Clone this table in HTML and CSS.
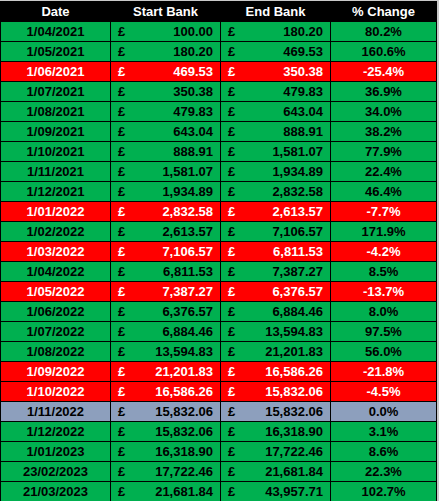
FILE: index.html
```html
<!DOCTYPE html>
<html lang="en">
<head>
    <meta charset="UTF-8">
    <title>Bank Growth</title>
    <link rel="stylesheet" href="styles.css">
</head>
<body>
    <table class="bank-table">
        <colgroup>
            <col class="col-date">
            <col class="col-money">
            <col class="col-money">
            <col class="col-change">
        </colgroup>
        <thead>
            <tr>
                <th>Date</th>
                <th>Start Bank</th>
                <th>End Bank</th>
                <th>% Change</th>
            </tr>
        </thead>
        <tbody id="rows"></tbody>
    </table>

    <script>
        const data = [
            ['1/04/2021', '100.00', '180.20', '80.2%', 'up'],
            ['1/05/2021', '180.20', '469.53', '160.6%', 'up'],
            ['1/06/2021', '469.53', '350.38', '-25.4%', 'down'],
            ['1/07/2021', '350.38', '479.83', '36.9%', 'up'],
            ['1/08/2021', '479.83', '643.04', '34.0%', 'up'],
            ['1/09/2021', '643.04', '888.91', '38.2%', 'up'],
            ['1/10/2021', '888.91', '1,581.07', '77.9%', 'up'],
            ['1/11/2021', '1,581.07', '1,934.89', '22.4%', 'up'],
            ['1/12/2021', '1,934.89', '2,832.58', '46.4%', 'up'],
            ['1/01/2022', '2,832.58', '2,613.57', '-7.7%', 'down'],
            ['1/02/2022', '2,613.57', '7,106.57', '171.9%', 'up'],
            ['1/03/2022', '7,106.57', '6,811.53', '-4.2%', 'down'],
            ['1/04/2022', '6,811.53', '7,387.27', '8.5%', 'up'],
            ['1/05/2022', '7,387.27', '6,376.57', '-13.7%', 'down'],
            ['1/06/2022', '6,376.57', '6,884.46', '8.0%', 'up'],
            ['1/07/2022', '6,884.46', '13,594.83', '97.5%', 'up'],
            ['1/08/2022', '13,594.83', '21,201.83', '56.0%', 'up'],
            ['1/09/2022', '21,201.83', '16,586.26', '-21.8%', 'down'],
            ['1/10/2022', '16,586.26', '15,832.06', '-4.5%', 'down'],
            ['1/11/2022', '15,832.06', '15,832.06', '0.0%', 'flat'],
            ['1/12/2022', '15,832.06', '16,318.90', '3.1%', 'up'],
            ['1/01/2023', '16,318.90', '17,722.46', '8.6%', 'up'],
            ['23/02/2023', '17,722.46', '21,681.84', '22.3%', 'up'],
            ['21/03/2023', '21,681.84', '43,957.71', '102.7%', 'up']
        ];

        function money(value) {
            return '<td><div class="money"><span>£</span><span>' + value + '</span></div></td>';
        }

        const tbody = document.getElementById('rows');
        tbody.innerHTML = data.map(function(r) {
            return '<tr class="' + r[4] + '">' +
                '<td class="center">' + r[0] + '</td>' +
                money(r[1]) + money(r[2]) +
                '<td class="center">' + r[3] + '</td></tr>';
        }).join('');
    </script>
</body>
</html>
```

FILE: styles.css
```css
* {
    margin: 0;
    padding: 0;
    box-sizing: border-box;
}

body {
    background-color: #c9c9c9;
    font-family: 'Liberation Sans', Arial, sans-serif;
    font-size: 13px;
    font-weight: bold;
    padding: 1px 2px 0 0;
}

.bank-table {
    width: 437px;
    border-collapse: collapse;
    table-layout: fixed;
}

.col-date,
.col-money {
    width: 110px;
}

.bank-table th,
.bank-table td {
    border: 1px solid #000;
    height: 20px;
    line-height: 18px;
    padding: 0;
    white-space: nowrap;
}

.bank-table th {
    background-color: #000;
    color: #fff;
    text-align: center;
}

.center {
    text-align: center;
}

.money {
    display: flex;
    justify-content: space-between;
    padding: 0 7px 0 7px;
}

.up {
    background-color: #00b050;
    color: #000;
}

.down {
    background-color: #ff0000;
    color: #fff;
}

.flat {
    background-color: #8d9fbd;
    color: #000;
}
```
